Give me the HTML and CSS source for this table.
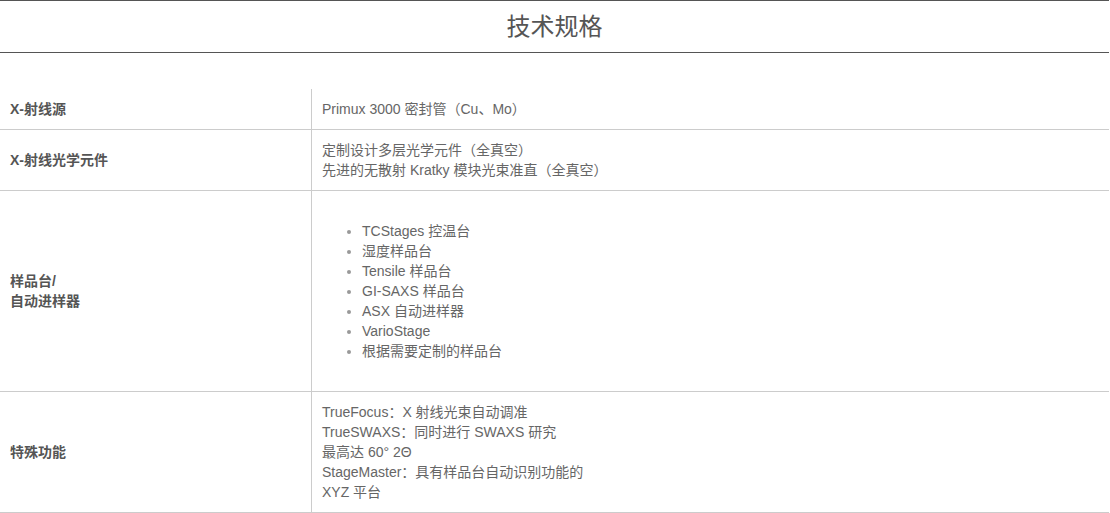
FILE: index.html
```html
<!DOCTYPE html>
<html lang="zh-CN">
<head>
<meta charset="utf-8">
<title>技术规格</title>
<link rel="stylesheet" href="styles.css">
</head>
<body>
<div class="spec">
  <h2 class="spec-title">技术规格</h2>
  <table class="spec-table">
    <tbody>
      <tr>
        <td class="label">X-射线源</td>
        <td class="value">Primux 3000 密封管（Cu、Mo）</td>
      </tr>
      <tr>
        <td class="label">X-射线光学元件</td>
        <td class="value">定制设计多层光学元件（全真空）<br>先进的无散射 Kratky 模块光束准直（全真空）</td>
      </tr>
      <tr>
        <td class="label">样品台/<br>自动进样器</td>
        <td class="value">
          <ul class="bullets">
            <li>TCStages 控温台</li>
            <li>湿度样品台</li>
            <li>Tensile 样品台</li>
            <li>GI-SAXS 样品台</li>
            <li>ASX 自动进样器</li>
            <li>VarioStage</li>
            <li>根据需要定制的样品台</li>
          </ul>
        </td>
      </tr>
      <tr>
        <td class="label">特殊功能</td>
        <td class="value">TrueFocus：X 射线光束自动调准<br>TrueSWAXS：同时进行 SWAXS 研究<br>最高达 60° 2Θ<br>StageMaster：具有样品台自动识别功能的<br>XYZ 平台</td>
      </tr>
    </tbody>
  </table>
</div>
</body>
</html>
```

FILE: styles.css
```css
html, body {
  margin: 0;
  padding: 0;
  background: #fff;
}

body {
  font-family: "Liberation Sans", Arial, "Noto Sans CJK SC", sans-serif;
  font-size: 14px;
  color: #666;
  text-spacing-trim: space-all;
  font-feature-settings: "halt" 0, "chws" 0, "palt" 0;
}

.spec {
  width: 1109px;
}

.spec-title {
  margin: 0;
  border-top: 1px solid #555;
  border-bottom: 1px solid #555;
  height: 51px;
  line-height: 51px;
  text-align: center;
  font-size: 24px;
  font-weight: normal;
  color: #555;
}

.spec-table {
  margin-top: 36px;
  width: 100%;
  table-layout: fixed;
  border-collapse: separate;
  border-spacing: 0;
}

.spec-table td {
  padding: 10px;
  line-height: 20px;
  vertical-align: middle;
  border-bottom: 1px solid #ccc;
}

.spec-table .label {
  width: 311px;
  box-sizing: border-box;
  font-weight: bold;
  color: #555;
}

.spec-table .value {
  border-left: 1px solid #ccc;
  color: #666;
}

.bullets {
  margin: 20px 0;
  padding-left: 40px;
  list-style: disc;
}

.bullets li::marker {
  color: #999;
}
```
